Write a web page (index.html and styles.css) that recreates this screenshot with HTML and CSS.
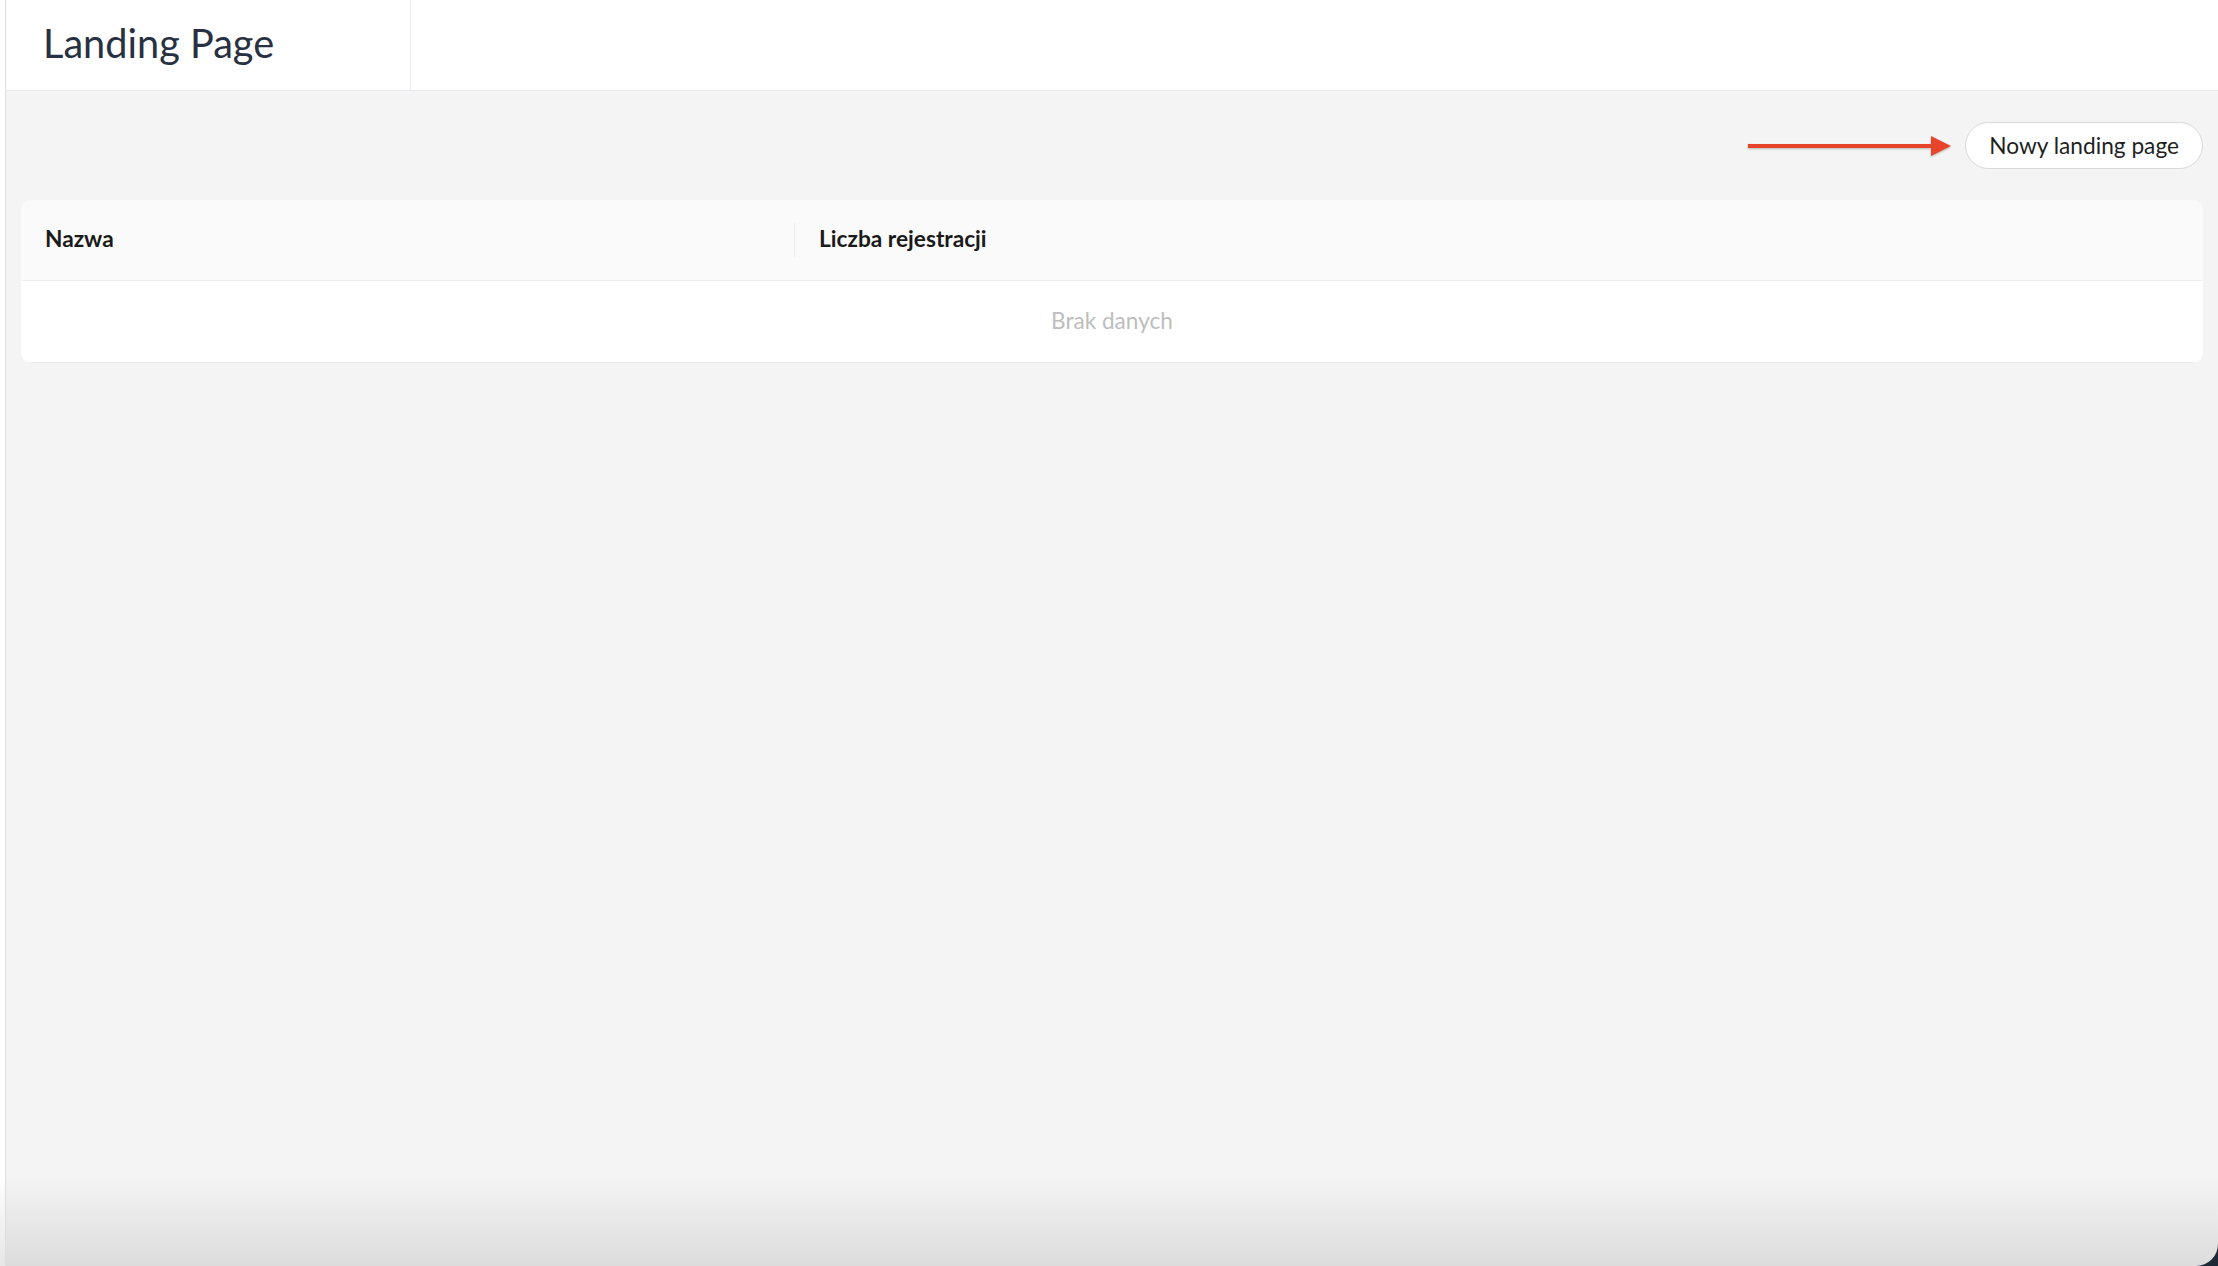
FILE: index.html
```html
<!DOCTYPE html>
<html lang="pl">

<head>
  <meta charset="UTF-8">
  <meta name="viewport" content="width=device-width, initial-scale=1.0">
  <title>Landing Page</title>

  <link rel="stylesheet" href="styles.css">
</head>

<body>
  <div id="app">
    <div class="rail"></div>

    <div class="main">
      <div class="topbar">
        <div class="topbar-title">Landing Page</div>
        <div class="topbar-rest"></div>
      </div>

      <div class="content">
        <div class="toolbar">
          <svg class="arrow" width="204" height="24" viewBox="0 0 204 24">
            <line x1="0" y1="12" x2="186" y2="12" stroke="#e8432b" stroke-width="4" />
            <polygon points="183,2 203,12 183,22" fill="#e8432b" />
          </svg>
          <button class="btn-new" type="button">Nowy landing page</button>
        </div>

        <div class="card">
          <table class="table">
            <thead>
              <tr>
                <th class="col-name">Nazwa</th>
                <th class="col-count">Liczba rejestracji</th>
              </tr>
            </thead>
            <tbody>
              <tr>
                <td class="empty" colspan="2">Brak danych</td>
              </tr>
            </tbody>
          </table>
        </div>
      </div>
    </div>
  </div>
</body>

</html>
```

FILE: styles.css
```css
html {
  background: #1d2937;
}

body {
  margin: 0;
  height: 100vh;
  overflow: hidden;
  border-bottom-right-radius: 22px;
  font-family: "Lato", "Noto Sans", sans-serif;
  background: linear-gradient(to bottom, #f4f4f4 0, #f4f4f4 calc(100% - 90px), #dcdcdc 100%);
}

#app {
  display: flex;
  height: 100%;
}

.rail {
  width: 5px;
  flex: none;
  background: linear-gradient(to bottom, #ffffff 0, #ffffff calc(100% - 90px), #e6e6e6 100%);
  border-right: 1px solid #dedede;
}

.main {
  flex: 1;
  display: flex;
  flex-direction: column;
}

.topbar {
  display: flex;
  height: 90px;
  background: #fff;
  border-bottom: 1px solid #e9e9ee;
}

.topbar-title {
  width: 367px;
  padding: 0 0 5px 37px;
  box-sizing: content-box;
  border-right: 1px solid #ebebf3;
  display: flex;
  align-items: center;
  font-size: 39.7px;
  color: #283142;
}

.topbar-rest {
  flex: 1;
}

.content {
  padding: 31px 15px;
}

.toolbar {
  display: flex;
  justify-content: flex-end;
  align-items: center;
  gap: 13px;
  margin-bottom: 31px;
}

.arrow {
  filter: drop-shadow(0 1px 1px rgba(0, 0, 0, 0.25));
}

.btn-new {
  height: 47px;
  padding: 0 23px;
  border: 1px solid #d9d9d9;
  border-radius: 24px;
  background: #fff;
  font-family: inherit;
  font-size: 22.7px;
  color: #1f1f1f;
}

.card {
  background: #fff;
  border-radius: 11px;
  overflow: hidden;
}

.table {
  width: 100%;
  border-collapse: collapse;
}

.table th {
  height: 77px;
  padding: 0 24px 3px;
  text-align: left;
  background: #fafafa;
  border-bottom: 1px solid #efefef;
  font-size: 22.7px;
  font-weight: 700;
  color: #1a1a1a;
}

.col-name {
  width: 726px;
  position: relative;
}

.col-name::after {
  content: "";
  position: absolute;
  right: 0;
  top: 23px;
  width: 1px;
  height: 34px;
  background: #ececec;
}

.empty {
  height: 77px;
  padding-bottom: 3px;
  text-align: center;
  font-size: 22.6px;
  color: #bdbdbd;
  border-bottom: 1px solid #ececec;
}
```
